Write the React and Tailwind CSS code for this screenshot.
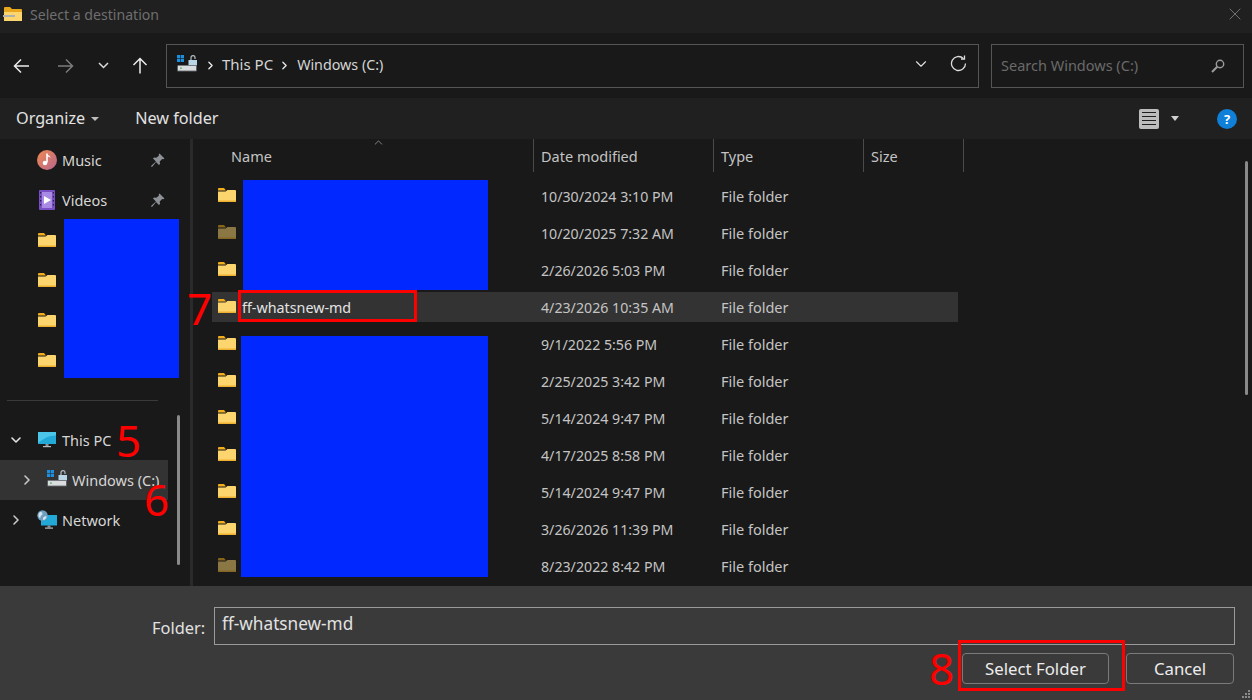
import { ChevronDown, ChevronRight, ChevronUp, X } from "lucide-react";

const files = [
    { date: "10/30/2024 3:10 PM" },
    { date: "10/20/2025 7:32 AM", dim: true },
    { date: "2/26/2026 5:03 PM" },
    { date: "4/23/2026 10:35 AM", name: "ff-whatsnew-md", active: true },
    { date: "9/1/2022 5:56 PM" },
    { date: "2/25/2025 3:42 PM" },
    { date: "5/14/2024 9:47 PM" },
    { date: "4/17/2025 8:58 PM" },
    { date: "5/14/2024 9:47 PM" },
    { date: "3/26/2026 11:39 PM" },
    { date: "8/23/2022 8:42 PM", dim: true },
];

function FolderIcon({ dim, className }) {
    return (
        <svg width="18" height="14" viewBox="0 0 18 14" className={className} style={dim ? { opacity: 0.5 } : undefined}>
            <path d="M0 1a1 1 0 0 1 1-1h5l2 2.5H0z" fill="#f2ae1c" />
            <path d="M0 3.4h7.6L9.5 2H17a1 1 0 0 1 1 1v10a1 1 0 0 1-1 1H1a1 1 0 0 1-1-1z" fill="#fdd56f" />
            <path d="M0 12.4h18V13a1 1 0 0 1-1 1H1a1 1 0 0 1-1-1z" fill="#eeb02f" />
        </svg>
    );
}

function DriveIcon({ className }) {
    return (
        <svg width="20" height="17" viewBox="0 0 20 17" className={className}>
            <rect x="0" y="0" width="3.2" height="3.2" fill="#1c8fe0" />
            <rect x="3.8" y="0" width="3.2" height="3.2" fill="#1c8fe0" />
            <rect x="0" y="3.8" width="3.2" height="3.2" fill="#1c8fe0" />
            <rect x="3.8" y="3.8" width="3.2" height="3.2" fill="#1c8fe0" />
            <path d="M14 5V2.6a2 2 0 0 1 4 0V4" fill="none" stroke="#a9b4bc" strokeWidth="1.3" />
            <rect x="11.5" y="5" width="8.5" height="5.5" fill="#b9d6e6" />
            <path d="M1 10h18l1 1v4.5a1 1 0 0 1-1 1H1a1 1 0 0 1-1-1V11z" fill="#5c6064" />
            <rect x="1" y="10.8" width="18" height="4.8" fill="#d9dde0" />
            <rect x="3" y="12.5" width="1.8" height="1.2" fill="#3fae49" />
        </svg>
    );
}

function MonitorIcon({ className }) {
    return (
        <svg width="18" height="16" viewBox="0 0 18 16" className={className}>
            <rect x="0" y="0" width="18" height="12" rx="0.5" fill="#22a9d8" />
            <path d="M0 0h18v3.5C12 3 6 6 0 11z" fill="#4cc6e8" />
            <rect x="7.5" y="12" width="3" height="2.2" fill="#8a9298" />
            <rect x="5" y="14" width="8" height="1.2" fill="#b4bcc2" />
        </svg>
    );
}

function NetworkIcon({ className }) {
    return (
        <svg width="20" height="20" viewBox="0 0 20 20" className={className}>
            <rect x="4" y="5" width="16" height="10.5" fill="#22a9d8" />
            <rect x="10.5" y="15.5" width="3" height="2" fill="#8a9298" />
            <rect x="8" y="17.5" width="8" height="1.2" fill="#b4bcc2" />
            <circle cx="5.5" cy="5.5" r="5.2" fill="#6f9fc0" />
            <path d="M2.5 2.5c2-1 3 0 3 1.5s-2 1-2 3-2 0-2-1 .2-2.5 1-3.5zM6 8c1-2 3-2 3.5-1.5S8 10 7 10 5.5 9 6 8z" fill="#d5e4ee" />
        </svg>
    );
}

function MusicIcon({ className }) {
    return (
        <svg width="20" height="20" viewBox="0 0 20 20" className={className}>
            <defs>
                <linearGradient id="musicBg" x1="0" y1="0" x2="1" y2="1">
                    <stop offset="0" stopColor="#ef8a4f" />
                    <stop offset="1" stopColor="#b9648f" />
                </linearGradient>
            </defs>
            <circle cx="10" cy="10" r="10" fill="url(#musicBg)" />
            <path d="M10 3.5v9" stroke="#fff" strokeWidth="1.6" />
            <path d="M10 3.5c.5 2 3.5 2 3.5 4.5-1-1.2-2.5-1.5-3.5-1.5z" fill="#fff" />
            <circle cx="8" cy="13" r="2.3" fill="#fff" />
        </svg>
    );
}

function VideoIcon({ className }) {
    return (
        <svg width="16" height="20" viewBox="0 0 16 20" className={className}>
            <rect x="0" y="0" width="16" height="20" rx="1" fill="#7b4fc4" />
            <rect x="3" y="2" width="10" height="16" fill="#a98be6" />
            <path d="M5 6l7 4-7 4z" fill="#fff" />
            <g fill="#2d1c50">
                <rect x="1" y="2" width="1.2" height="1.5" />
                <rect x="1" y="6" width="1.2" height="1.5" />
                <rect x="1" y="10" width="1.2" height="1.5" />
                <rect x="1" y="14" width="1.2" height="1.5" />
                <rect x="13.8" y="2" width="1.2" height="1.5" />
                <rect x="13.8" y="6" width="1.2" height="1.5" />
                <rect x="13.8" y="10" width="1.2" height="1.5" />
                <rect x="13.8" y="14" width="1.2" height="1.5" />
            </g>
        </svg>
    );
}

function PinIcon() {
    return (
        <svg width="14" height="14" viewBox="0 0 14 14" className="ml-auto">
            <path d="M8.5 0.5l5 5-1.3.7-1-.3-2.5 2.700.3 2.400-1 1-3-3-3.500 4.500-1.500.5.500-1.500L5 8.500l-3-3 1-1 2.400.3L8 2.500l-.3-1z" fill="#8e9296" />
        </svg>
    );
}

function NavRow({ icon, label, pin, arrow, selected, indent }) {
    return (
        <div className={`flex items-center h-10 ${selected ? "bg-[#333333] w-[168px]" : "w-[165px]"}`}>
            <div className={`${indent ? "w-[46px] pl-[19px]" : "w-[36px] pl-[8px]"} shrink-0`}>
                {arrow === "down" && <ChevronDown size={16} strokeWidth={2.4} className="text-[#e4e4e4]" />}
                {arrow === "right" && <ChevronRight size={16} strokeWidth={2.4} className="text-[#c8c8c8]" />}
            </div>
            <div className="w-[26px] shrink-0 flex items-center">{icon}</div>
            <span className="text-[#d6d6d6] pt-[2px]">{label}</span>
            {pin && <PinIcon />}
        </div>
    );
}

function App() {
    return (
        <div className="relative w-[1252px] h-[700px] overflow-hidden flex flex-col bg-[#191919] text-[14.5px] font-['Noto_Sans','Open_Sans',sans-serif]">
            {/* title bar */}
            <div className="h-[33px] bg-[#202020] flex items-center pl-[3px] pr-[7px] shrink-0">
                <svg width="20" height="15" viewBox="0 0 20 15" className="mr-[7px] -mt-[5px]">
                    <path d="M1 1a1 1 0 0 1 1-1h5l2 2h9a1 1 0 0 1 1 1v2H1z" fill="#e8a71c" />
                    <rect x="1" y="5" width="18" height="9" fill="#fcd56e" />
                    <rect x="0" y="8" width="12" height="2" fill="#b0b0b0" />
                </svg>
                <span className="text-[#6f6f6f] text-[14.1px] -mt-[4px]">Select a destination</span>
                <X size={20} strokeWidth={1.1} className="ml-auto -mt-[5px] text-[#7a7a7a]" />
            </div>

            {/* address row */}
            <div className="h-[65px] bg-[#191919] flex items-center shrink-0">
                <div className="w-[166px] shrink-0 flex items-center pl-[13px]">
                    <svg width="17" height="16" viewBox="0 0 17 16" fill="none" stroke="#ececec" strokeWidth="1.5">
                        <path d="M16 8H1.5M8 1.5L1.5 8 8 14.500" />
                    </svg>
                    <svg width="17" height="16" viewBox="0 0 17 16" fill="none" stroke="#7c7c7c" strokeWidth="1.5" className="ml-[27px]">
                        <path d="M1 8h14.500M9 1.500L15.500 8 9 14.500" />
                    </svg>
                    <svg width="11" height="7" viewBox="0 0 11 7" fill="none" stroke="#dcdcdc" strokeWidth="1.5" className="ml-[24px]">
                        <path d="M1 1l4.500 4.500L10 1" />
                    </svg>
                    <svg width="16" height="17" viewBox="0 0 16 17" fill="none" stroke="#ececec" strokeWidth="1.5" className="ml-[23px]">
                        <path d="M8 16.500V1.500M1.500 8L8 1.500 14.500 8" />
                    </svg>
                </div>
                <div className="w-[813px] h-[44px] border border-[#555555] flex items-center pl-[10px] pr-[11px] shrink-0">
                    <DriveIcon className="-mt-[4px]" />
                    <ChevronRight size={13} strokeWidth={2.4} className="ml-[7px] text-[#ececec]" />
                    <span className="ml-[5px] text-[#d4d4d4] text-[15px] -mt-[2px]">This PC</span>
                    <ChevronRight size={13} strokeWidth={2.4} className="ml-[5px] text-[#ececec]" />
                    <span className="ml-[6px] text-[#d4d4d4] -mt-[2px] text-[14.3px]">Windows (C:)</span>
                    <ChevronDown size={18} strokeWidth={1.5} className="ml-auto mr-[20px] -mt-[4px] text-[#e0e0e0]" />
                    <svg width="17" height="17" viewBox="0 0 17 17" fill="none" stroke="#dcdcdc" strokeWidth="1.3" className="-mt-[5px]">
                        <path d="M15.500 8.500a7 7 0 1 1-2.200-5.100" />
                        <path d="M14.500 0.500v3.500H11" />
                    </svg>
                </div>
                <div className="w-[253px] h-[44px] ml-[12px] border border-[#555555] flex items-center pl-[9px] pr-[18px] shrink-0">
                    <span className="text-[#6a6a6a]">Search Windows (C:)</span>
                    <svg width="14" height="14" viewBox="0 0 14 14" fill="none" stroke="#9c9c9c" className="ml-auto">
                        <circle cx="9" cy="5" r="3.700" strokeWidth="1.4" />
                        <path d="M6.200 7.800L1 13" strokeWidth="2" />
                    </svg>
                </div>
            </div>

            {/* toolbar */}
            <div className="h-[41px] bg-[#202020] flex items-center pl-[16px] shrink-0 text-[16.2px] text-[#e2e2e2]">
                <span>Organize</span>
                <span className="ml-[6px] w-0 h-0 border-x-[4px] border-x-transparent border-t-[4px] border-t-[#bdbdbd]" />
                <span className="ml-[36px]">New folder</span>
                <div className="ml-auto flex items-center pr-[15px]">
                    <div className="w-5 h-5 rounded-[2px] bg-[#bdbdbd] flex flex-col justify-center gap-[3px] px-[3px]">
                        <div className="h-px bg-[#202020]" />
                        <div className="h-px bg-[#202020]" />
                        <div className="h-px bg-[#202020]" />
                        <div className="h-px bg-[#202020]" />
                    </div>
                    <span className="ml-[12px] w-0 h-0 border-x-[4px] border-x-transparent border-t-[5px] border-t-[#cfcfcf]" />
                    <div className="ml-[38px] w-5 h-5 rounded-full bg-[#0f7fd8] text-white text-[13px] leading-5 text-center font-bold">?</div>
                </div>
            </div>

            {/* main area */}
            <div className="h-[447px] flex shrink-0">
                <div className="w-[190px] shrink-0 relative pt-[1px]">
                    <NavRow icon={<MusicIcon className="ml-[1px]" />} label="Music" pin />
                    <NavRow icon={<VideoIcon className="ml-[3px]" />} label="Videos" pin />
                    <NavRow icon={<FolderIcon className="ml-[2px]" />} label="" />
                    <NavRow icon={<FolderIcon className="ml-[2px]" />} label="" />
                    <NavRow icon={<FolderIcon className="ml-[2px]" />} label="" />
                    <NavRow icon={<FolderIcon className="ml-[2px]" />} label="" />
                    <div className="h-[40px] flex items-center pl-[7px]">
                        <div className="w-[151px] h-px bg-[#3a3a3a]" />
                    </div>
                    <NavRow icon={<MonitorIcon className="ml-[2px]" />} label="This PC" arrow="down" />
                    <NavRow icon={<DriveIcon className="ml-[1px] -mt-[3px]" />} label="Windows (C:)" arrow="right" selected indent />
                    <NavRow icon={<NetworkIcon className="ml-[1px] -mt-[1px]" />} label="Network" arrow="right" />
                    <div className="absolute left-[177px] top-[276px] w-[3px] h-[150px] rounded-full bg-[#8a8a8a]" />
                </div>
                <div className="w-[3px] bg-[#2a2a2a] shrink-0" />
                <div className="flex-1 relative">
                    <div className="h-[42px] flex items-start text-[#c4c4c4]">
                        <div className="w-[341px] h-[33px] border-r border-[#4a4a4a] relative pl-[38px] pt-[7px]">
                            Name
                            <ChevronUp size={13} strokeWidth={1.5} className="absolute left-[179px] -top-[3px] text-[#9a9a9a]" />
                        </div>
                        <div className="w-[180px] h-[33px] border-r border-[#4a4a4a] pl-[7px] pt-[7px]">Date modified</div>
                        <div className="w-[150px] h-[33px] border-r border-[#4a4a4a] pl-[7px] pt-[7px]">Type</div>
                        <div className="w-[100px] h-[33px] border-r border-[#4a4a4a] pl-[7px] pt-[7px]">Size</div>
                    </div>
                    <div className="flex flex-col gap-[7px] w-[746px] ml-[19px]">
                        {files.map((file, index) => (
                            <div key={index} className={`h-[30px] flex items-center ${file.active ? "bg-[#333333]" : ""}`}>
                                <div className="w-[329px] flex items-center pl-[6px] shrink-0">
                                    <FolderIcon dim={file.dim} className="-mt-[2px]" />
                                    <span className="ml-[6px] text-[#e4e4e4] text-[14.3px] pt-[2px]">{file.name}</span>
                                </div>
                                <span className="w-[180px] shrink-0 text-[#c4c4c4] text-[14.2px] pt-[2px]">{file.date}</span>
                                <span className="text-[#c4c4c4] pt-[2px]">File folder</span>
                            </div>
                        ))}
                    </div>
                    <div className="absolute left-[1052px] top-[22px] w-[3px] h-[234px] rounded-full bg-[#8a8a8a]" />
                </div>
            </div>

            {/* bottom bar */}
            <div className="flex-1 bg-[#3a3a3a] relative">
                <div className="flex items-start pt-[21px] pl-[152px]">
                    <span className="mt-[9px] w-[62px] text-[#e2e2e2] text-[16.4px] shrink-0">Folder:</span>
                    <div className="w-[1021px] h-[38px] border border-[#9a9a9a] pl-[7px] pt-[3px] text-[17.2px] text-[#e2e2e2]">ff-whatsnew-md</div>
                </div>
                <div className="flex justify-end gap-[17px] pr-[18px] mt-[8px]">
                    <button className="w-[147px] h-[31px] rounded-[4px] border border-[#7a7a7a] text-[16.8px] text-[#ececec]">Select Folder</button>
                    <button className="w-[108px] h-[31px] rounded-[4px] border border-[#7a7a7a] text-[16.8px] text-[#ececec]">Cancel</button>
                </div>
                <svg width="10" height="10" viewBox="0 0 10 10" className="absolute right-[1px] bottom-[1px]" fill="#8a8a8a">
                    <rect x="7" y="1" width="2" height="2" />
                    <rect x="4" y="4" width="2" height="2" />
                    <rect x="7" y="4" width="2" height="2" />
                    <rect x="1" y="7" width="2" height="2" />
                    <rect x="4" y="7" width="2" height="2" />
                    <rect x="7" y="7" width="2" height="2" />
                </svg>
            </div>

            {/* redactions */}
            <div className="absolute left-[64px] top-[219px] w-[115px] h-[159px] bg-[#0028ff]" />
            <div className="absolute left-[243px] top-[180px] w-[245px] h-[110px] bg-[#0028ff]" />
            <div className="absolute left-[241px] top-[336px] w-[247px] h-[241px] bg-[#0028ff]" />

            {/* annotations */}
            <div className="absolute left-[238px] top-[290px] w-[179px] h-[32px] border-[3px] border-[#ff0000]" />
            <div className="absolute left-[958px] top-[640px] w-[167px] h-[51px] border-[3px] border-[#ff0000]" />
            <span className="absolute left-[116px] top-[412px] text-[44px] leading-[56px] text-[#ff0000]">5</span>
            <span className="absolute left-[144px] top-[471px] text-[44px] leading-[56px] text-[#ff0000]">6</span>
            <span className="absolute left-[187px] top-[280px] text-[44px] leading-[56px] text-[#ff0000]">7</span>
            <span className="absolute left-[929px] top-[640px] text-[44px] leading-[56px] text-[#ff0000]">8</span>
        </div>
    );
}

export default App
